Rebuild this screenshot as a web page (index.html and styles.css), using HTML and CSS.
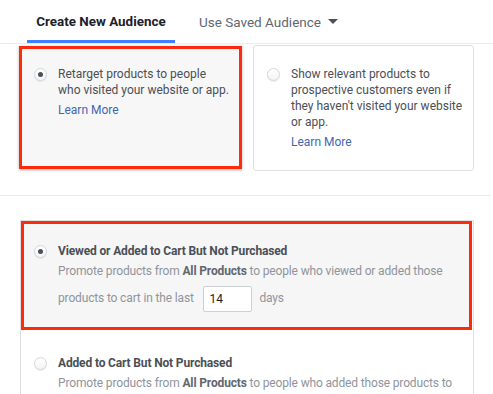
FILE: index.html
```html
<!DOCTYPE html>
<html lang="en">
<head>
    <meta charset="UTF-8">
    <meta name="viewport" content="width=device-width, initial-scale=1.0">
    <title>Audience</title>
    <link rel="stylesheet" href="styles.css">
</head>
<body>

<div class="tabs">
    <div class="tab active">Create New Audience</div>
    <div class="tab">Use Saved Audience <span class="caret"></span></div>
</div>

<div class="cards">
    <div class="card selected">
        <span class="radio checked"></span>
        <div class="card-text">
            <p>Retarget products to people<br>who visited your website or app.</p>
            <a href="#">Learn More</a>
        </div>
    </div>
    <div class="card">
        <span class="radio"></span>
        <div class="card-text">
            <p>Show relevant products to<br>prospective customers even if<br>they haven't visited your website<br>or app.</p>
            <a href="#">Learn More</a>
        </div>
    </div>
</div>

<div class="divider"></div>

<div class="options">
    <div class="option selected">
        <span class="radio checked"></span>
        <div class="option-text">
            <div class="option-title">Viewed or Added to Cart But Not Purchased</div>
            <div class="option-desc">Promote products from <b>All Products</b> to people who viewed or added those<br>products to cart in the last <input class="days-input" type="text" value="14"> days</div>
        </div>
    </div>
    <div class="option">
        <span class="radio"></span>
        <div class="option-text">
            <div class="option-title">Added to Cart But Not Purchased</div>
            <div class="option-desc">Promote products from <b>All Products</b> to people who added those products to</div>
        </div>
    </div>
</div>

</body>
</html>
```

FILE: styles.css
```css
body { margin: 0; background: #fff; font-family: Roboto, "Liberation Sans", Arial, sans-serif; font-size: 12px; color: #4b4f56; overflow: hidden; }

.tabs { display: flex; height: 43px; border-bottom: 1px solid #e9ebee; padding-left: 27px; }
.tab { display: flex; align-items: center; white-space: nowrap; font-size: 13.5px; color: #606770; padding: 3px 0 0 24px; border-bottom: 3px solid transparent; }
.tab.active { box-sizing: border-box; width: 148px; justify-content: center; padding-left: 0; font-size: 13.4px; font-weight: bold; color: #1d2129; border-bottom-color: #4080ff; }
.caret { display: inline-block; margin-left: 7px; border-left: 5px solid transparent; border-right: 5px solid transparent; border-top: 5px solid #4b4f56; }

.cards { display: flex; padding-left: 19px; margin-top: 1px; }
.card { display: flex; align-items: flex-start; box-sizing: border-box; width: 221px; background: #fff; border: 1px solid #dddfe2; border-radius: 3px; padding: 20px 0 20px 13px; }
.card.selected { width: 223px; margin: 1px 11px 2px 0; border: 3px solid #fc2b0e; border-radius: 0; background: #f7f7f7; padding: 17px 0 0 12px; box-shadow: 0 1px 3px rgba(0,0,0,0.3); }
.card-text { margin-left: 11px; white-space: nowrap; }
.card-text p { margin: 0; line-height: 16px; }
.card-text a { display: block; margin-top: 4px; line-height: 16px; color: #4267b2; text-decoration: none; }

.radio { flex: none; box-sizing: border-box; width: 13px; height: 13px; border-radius: 50%; border: 1px solid #d3d6db; background: linear-gradient(#fff, #f3f4f6); box-shadow: 0 1px 1px rgba(0,0,0,0.08); margin-top: 2px; position: relative; }
.radio.checked::after { content: ""; position: absolute; left: 3px; top: 3px; width: 5px; height: 5px; border-radius: 50%; background: #4b4f56; }

.divider { height: 1px; background: #e9ebee; margin: 24px 2px 0 0; }

.options { margin: 24px 19px 0 20px; border: 1px solid #dddfe2; border-bottom: none; }
.option { display: flex; align-items: flex-start; padding: 26px 10px 0 13px; }
.option.selected { margin-right: 1px; border: 3px solid #fc2b0e; background: #f6f6f6; padding: 20px 10px 15px 10px; }
.option .radio { margin-top: 1px; }
.option-text { margin-left: 11px; white-space: nowrap; }
.option-title { font-weight: bold; line-height: 14px; color: #4b4f56; letter-spacing: -0.15px; }
.option-desc { line-height: 27px; color: #90949c; letter-spacing: -0.15px; }
.option-desc b { color: #606770; }
.days-input { box-sizing: border-box; width: 49px; height: 26px; margin: 0 5px 0 6px; padding: 0 6px; border: 1px solid #ccd0d5; border-radius: 2px; font-family: inherit; font-size: 12px; color: #1d2129; vertical-align: middle; background: #fff; }
```
